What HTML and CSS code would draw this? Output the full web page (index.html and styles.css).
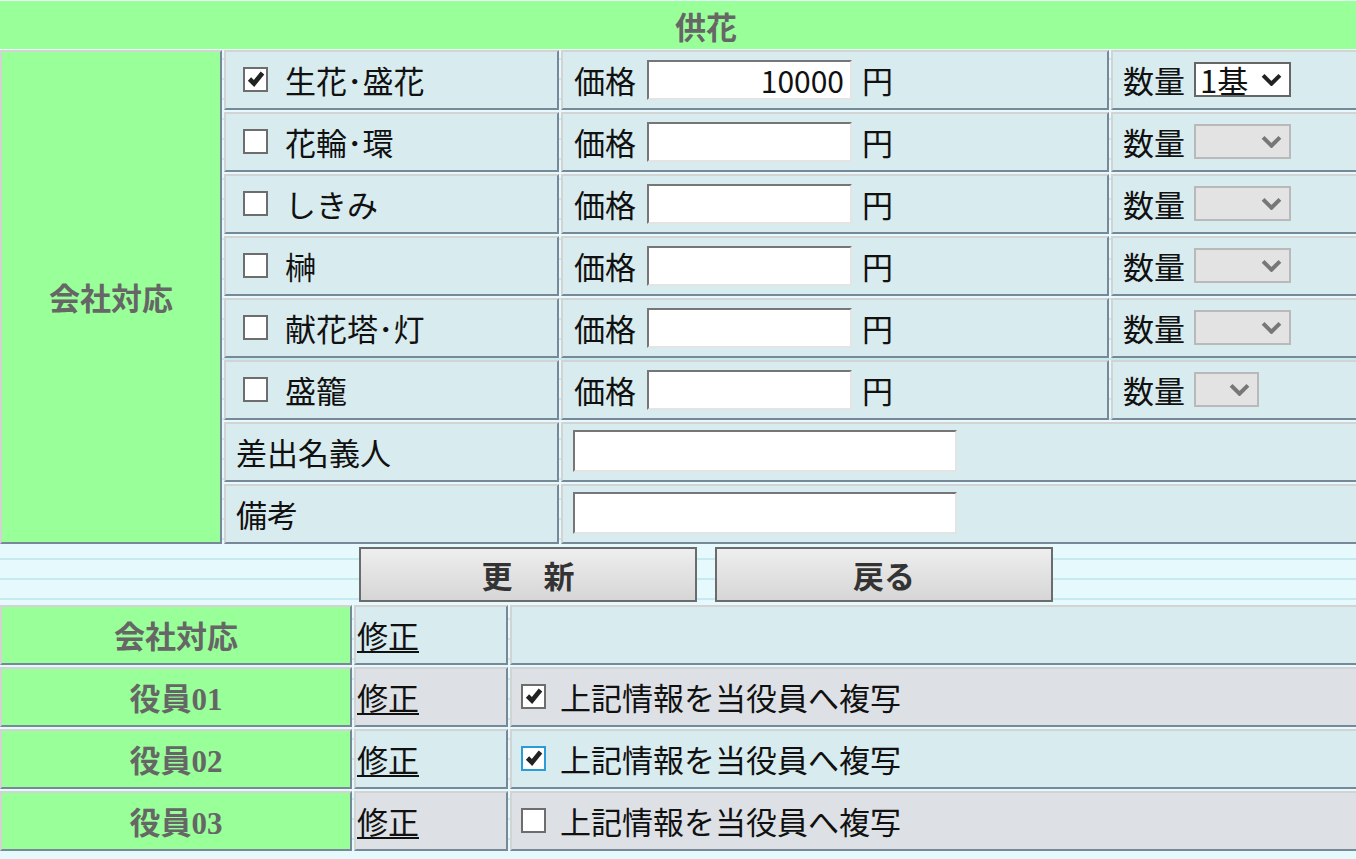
FILE: index.html
```html
<!DOCTYPE html>
<html lang="ja">
<head>
    <meta charset="UTF-8">
    <title>供花</title>
    <link rel="stylesheet" href="styles.css">
</head>
<body>
    <div class="page">
        <div class="title">供花</div>

        <div class="form-grid">
            <div class="cell side">会社対応</div>

            <div class="cell item"><span class="cb checked"><svg viewBox="0 0 20 20"><path d="M3.5 10 L8 14.5 L16.5 4"/></svg></span>生花･盛花</div>
            <div class="cell price">価格<input type="text" class="txt price-input" value="10000">円</div>
            <div class="cell qty">数量<span class="sel"><span class="sel-text">1基</span><svg viewBox="0 0 20 12"><path d="M2 2 L10 10 L18 2"/></svg></span></div>

            <div class="cell item"><span class="cb"></span>花輪･環</div>
            <div class="cell price">価格<input type="text" class="txt price-input">円</div>
            <div class="cell qty">数量<span class="sel disabled"><span class="sel-text"></span><svg viewBox="0 0 20 12"><path d="M2 2 L10 10 L18 2"/></svg></span></div>

            <div class="cell item"><span class="cb"></span>しきみ</div>
            <div class="cell price">価格<input type="text" class="txt price-input">円</div>
            <div class="cell qty">数量<span class="sel disabled"><span class="sel-text"></span><svg viewBox="0 0 20 12"><path d="M2 2 L10 10 L18 2"/></svg></span></div>

            <div class="cell item"><span class="cb"></span>榊</div>
            <div class="cell price">価格<input type="text" class="txt price-input">円</div>
            <div class="cell qty">数量<span class="sel disabled"><span class="sel-text"></span><svg viewBox="0 0 20 12"><path d="M2 2 L10 10 L18 2"/></svg></span></div>

            <div class="cell item"><span class="cb"></span>献花塔･灯</div>
            <div class="cell price">価格<input type="text" class="txt price-input">円</div>
            <div class="cell qty">数量<span class="sel disabled"><span class="sel-text"></span><svg viewBox="0 0 20 12"><path d="M2 2 L10 10 L18 2"/></svg></span></div>

            <div class="cell item"><span class="cb"></span>盛籠</div>
            <div class="cell price">価格<input type="text" class="txt price-input">円</div>
            <div class="cell qty">数量<span class="sel disabled narrow"><svg viewBox="0 0 20 12"><path d="M2 2 L10 10 L18 2"/></svg></span></div>

            <div class="cell item label">差出名義人</div>
            <div class="cell wide"><input type="text" class="txt long-input"></div>

            <div class="cell item label">備考</div>
            <div class="cell wide"><input type="text" class="txt long-input"></div>
        </div>

        <div class="buttons">
            <button class="btn">更　新</button>
            <button class="btn">戻る</button>
        </div>

        <div class="list-grid">
            <div class="cell side">会社対応</div>
            <div class="cell link"><a href="#">修正</a></div>
            <div class="cell copy"></div>

            <div class="cell side">役員01</div>
            <div class="cell link alt"><a href="#">修正</a></div>
            <div class="cell copy alt"><span class="cb checked"><svg viewBox="0 0 20 20"><path d="M3.5 10 L8 14.5 L16.5 4"/></svg></span>上記情報を当役員へ複写</div>

            <div class="cell side">役員02</div>
            <div class="cell link"><a href="#">修正</a></div>
            <div class="cell copy"><span class="cb checked focus"><svg viewBox="0 0 20 20"><path d="M3.5 10 L8 14.5 L16.5 4"/></svg></span>上記情報を当役員へ複写</div>

            <div class="cell side">役員03</div>
            <div class="cell link alt"><a href="#">修正</a></div>
            <div class="cell copy alt"><span class="cb"></span>上記情報を当役員へ複写</div>
        </div>
    </div>
</body>
</html>
```

FILE: styles.css
```css
html, body {
    margin: 0;
    overflow: hidden;
}
body {
    font-family: "Noto Sans CJK JP", sans-serif;
    font-size: 31px;
    color: #111;
    background-color: #e6f9fd;
    background-image: repeating-linear-gradient(to bottom, transparent 0, transparent 18px, #c6eaef 18px, #c6eaef 20px);
}
.page {
    width: 1412px;
}
.title {
    margin-top: 1px;
    height: 48px;
    background: #99ff99;
    color: #666;
    font-weight: bold;
    font-size: 31px;
    display: flex;
    align-items: center;
    justify-content: center;
}
.form-grid {
    margin-top: 1px;
    display: grid;
    grid-template-columns: 222px 335px 548px 301px;
    grid-auto-rows: 60px;
    gap: 2px;
}
.cell {
    box-sizing: border-box;
    border: 2px solid;
    border-color: #d3d3d3 #778899 #778899 #d3d3d3;
    background: #d8ebee;
    display: flex;
    align-items: center;
    white-space: nowrap;
    padding-bottom: 2px;
}
.side {
    background: #99ff99;
    color: #666;
    font-family: "Liberation Serif", "Noto Sans CJK JP", serif;
    font-weight: bold;
    justify-content: center;
}
.form-grid .side {
    grid-row: 1 / span 8;
}
.item {
    padding-left: 17px;
}
.item.label {
    padding-left: 10px;
}
.price {
    padding-left: 11px;
}
.qty {
    padding-left: 10px;
}
.wide {
    grid-column: 3 / span 2;
    padding-left: 10px;
}
.cb {
    box-sizing: border-box;
    width: 25px;
    height: 25px;
    border: 2px solid #6d6d6d;
    background: #fff;
    margin-right: 17px;
    display: inline-flex;
    align-items: center;
    justify-content: center;
    flex-shrink: 0;
}
.cb svg {
    width: 20px;
    height: 20px;
    display: none;
}
.cb.checked svg {
    display: block;
}
.cb path {
    fill: none;
    stroke: #222;
    stroke-width: 4.6;
}
.cb.focus {
    border-color: #2a9dd9;
}
.txt {
    box-sizing: border-box;
    border: 2px solid;
    border-color: #767676 #e4e4e4 #e4e4e4 #767676;
    background: #fff;
    font-family: "Noto Sans CJK JP", sans-serif;
    font-size: 30px;
    color: #111;
    padding: 0 6px;
    outline: none;
}
.price-input {
    width: 205px;
    height: 40px;
    margin: 2px 10px 0 11px;
    text-align: right;
}
.long-input {
    width: 384px;
    height: 42px;
}
.sel {
    box-sizing: border-box;
    width: 97px;
    height: 35px;
    margin-left: 9px;
    border: 2px solid #666;
    background: #fff;
    display: inline-flex;
    align-items: center;
    justify-content: space-between;
    padding: 0 7px 0 4px;
}
.sel-text {
    font-size: 31px;
    line-height: 1;
}
.sel svg {
    width: 21px;
    height: 13px;
}
.sel path {
    fill: none;
    stroke: #222;
    stroke-width: 3.8;
}
.sel.disabled {
    background: #e3e3e3;
    border-color: #b9b9b9;
}
.sel.disabled path {
    stroke: #777;
}
.sel.narrow {
    width: 65px;
    justify-content: flex-end;
}
.buttons {
    display: flex;
    justify-content: center;
    gap: 18px;
    margin-top: 3px;
}
.btn {
    box-sizing: border-box;
    width: 338px;
    height: 55px;
    border: 2px solid #6b6b6b;
    background: linear-gradient(#eeeeee, #d6d6d6);
    font-family: "Noto Sans CJK JP", sans-serif;
    font-size: 31px;
    font-weight: bold;
    color: #333;
    padding: 0;
}
.list-grid {
    margin-top: 3px;
    display: grid;
    grid-template-columns: 352px 154px 902px;
    grid-auto-rows: 60px;
    gap: 2px;
}
.link {
    padding-left: 1px;
}
.link a {
    color: #111;
    text-decoration-thickness: 2px;
    text-underline-offset: 3px;
}
.copy {
    padding-left: 9px;
}
.copy .cb {
    margin-right: 14px;
}
.alt {
    background: #dde1e5;
}
```
